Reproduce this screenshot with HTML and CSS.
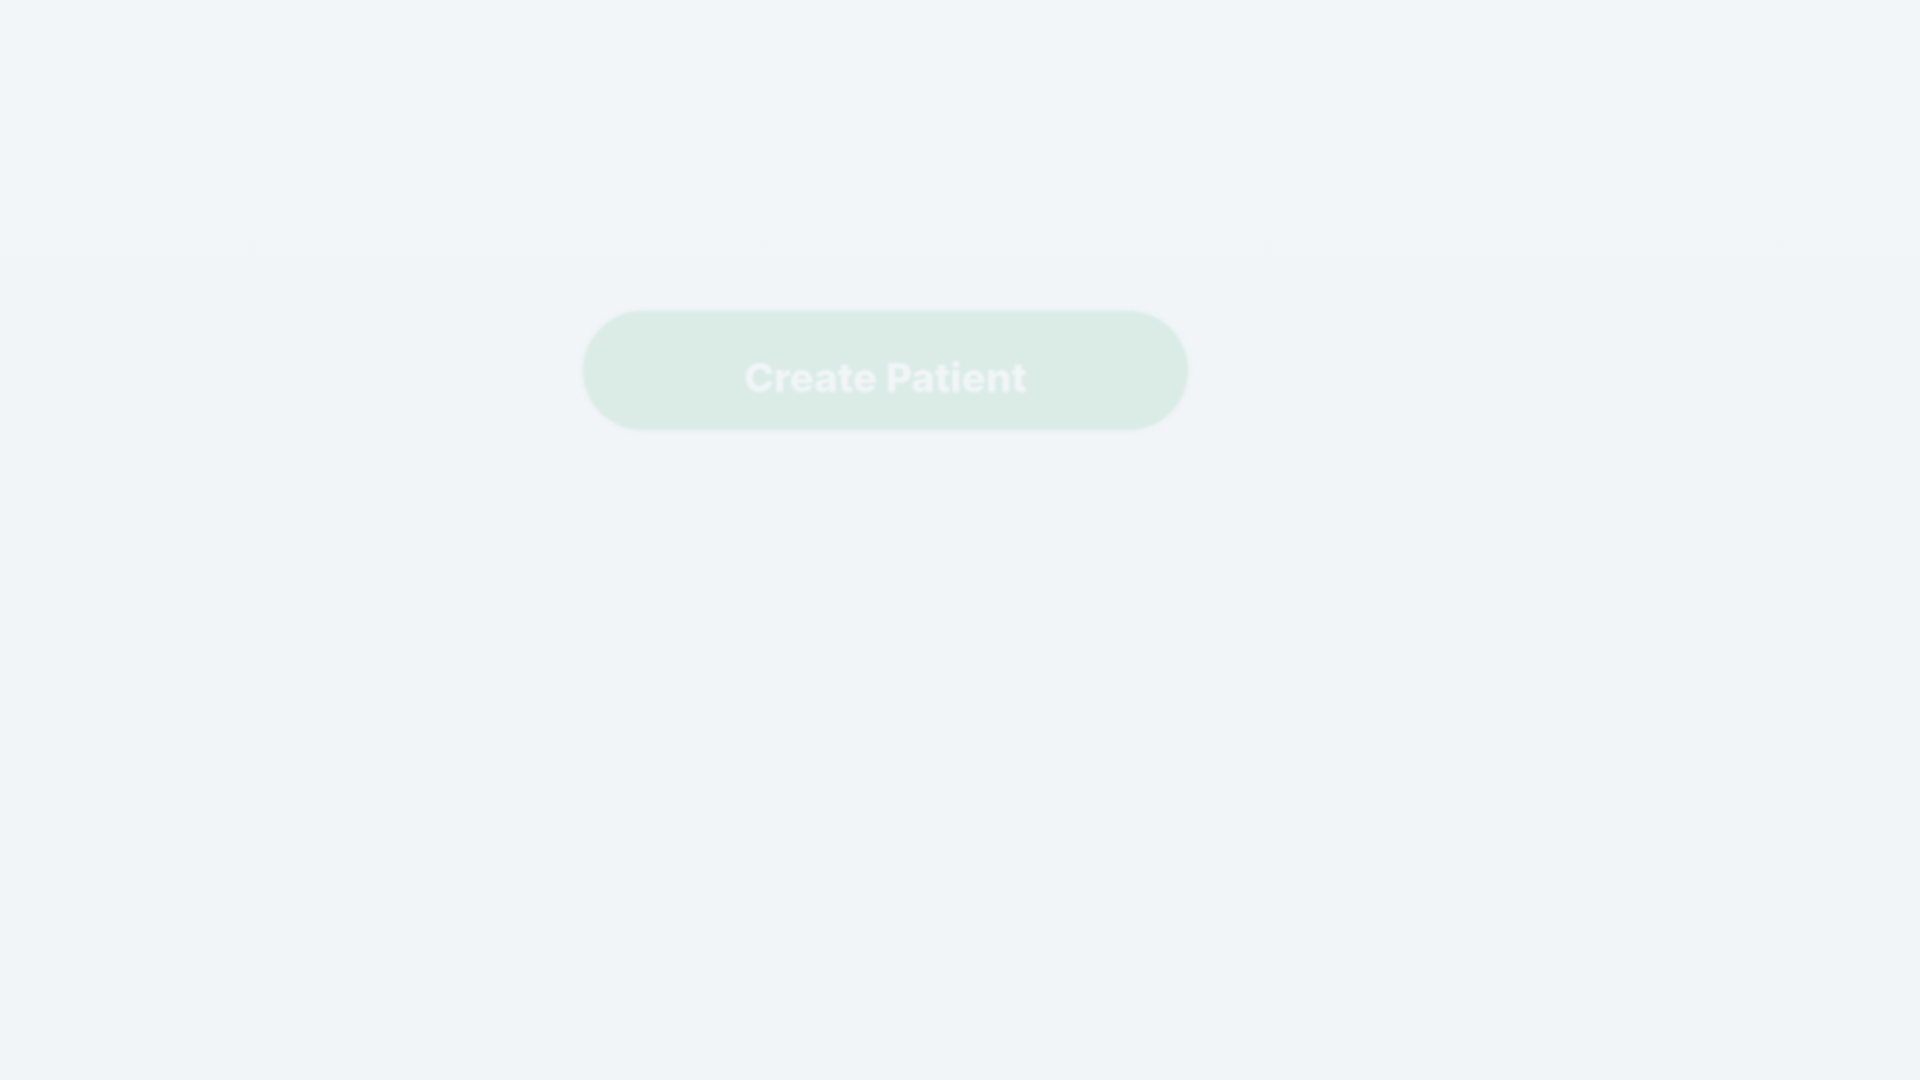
FILE: index.html
```html
<!DOCTYPE html>
<html lang="en">
<head>
<meta charset="utf-8">
<title>Create Patient</title>
<link rel="stylesheet" href="styles.css">
</head>
<body>
<main class="page">
  <div class="actions">
    <button class="btn-create" type="button">Create Patient</button>
  </div>
</main>
</body>
</html>
```
FILE: styles.css
```css
html, body {
  margin: 0;
  padding: 0;
  height: 100%;
}
body {
  background: linear-gradient(180deg, #f3f6f9 0%, #f1f5f7 55%, #f2f5f8 100%);
  font-family: Inter, "Liberation Sans", Arial, sans-serif;
  overflow: hidden;
}
.page {
  width: 1920px;
  height: 1080px;
  box-sizing: border-box;
  padding: 311px 0 0 583px;
}
.actions {
  display: flex;
}
.btn-create {
  width: 605px;
  height: 119px;
  border: none;
  border-radius: 60px;
  background: #dbece7;
  color: #f0f5f5;
  font-family: Inter, "Liberation Sans", Arial, sans-serif;
  font-weight: 800;
  font-size: 40px;
  letter-spacing: 0.1px;
  line-height: 1;
  padding: 14px 0 0 0;
  display: flex;
  align-items: center;
  justify-content: center;
  filter: blur(1.2px);
  box-shadow: 0 0 6px rgba(220, 236, 231, 0.6);
}
```
